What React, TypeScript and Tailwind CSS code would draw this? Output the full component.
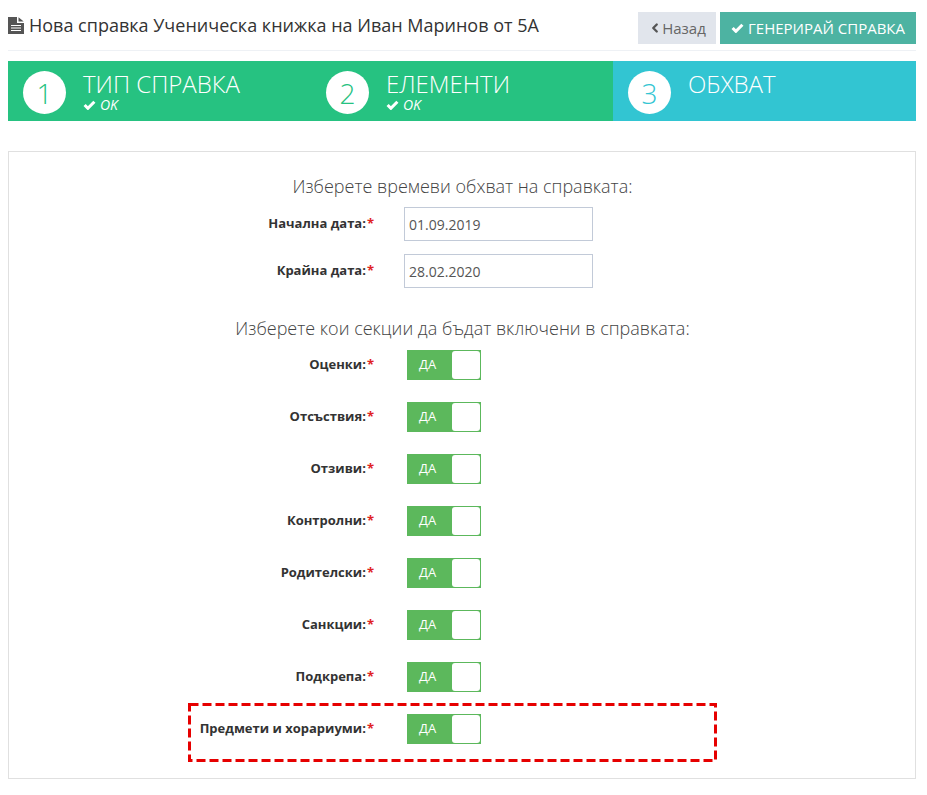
import { ChevronLeft } from 'lucide-react'

const sections = ['Оценки', 'Отсъствия', 'Отзиви', 'Контролни', 'Родителски', 'Санкции', 'Подкрепа', 'Предмети и хорариуми']

function Check({ className }: { className: string }) {
  return (
    <svg viewBox="0 0 16 12" className={className} fill="none" stroke="currentColor" strokeWidth="3.8">
      <path d="M2 6l4 4 8-8" />
    </svg>
  )
}

function FileIcon() {
  return (
    <svg viewBox="0 0 16 17" className="h-[17px] w-4 shrink-0">
      <path d="M0 0h9v6h7v11H0z" fill="#555" />
      <path d="M10.5 0.3L15.7 4.5h-5.2z" fill="#555" />
      <path d="M3 8.5h10M3 11h10M3 13.5h10" stroke="#fff" strokeWidth="1.2" />
    </svg>
  )
}

function Label({ text }: { text: string }) {
  return (
    <div className="mt-[-2px] w-[365px] shrink-0 text-right text-[13px] leading-[18px] font-bold text-[#333]">
      {text}:<span className="ml-[1px] text-[#e02222]">*</span>
    </div>
  )
}

function DateRow({ text, value }: { text: string; value: string }) {
  return (
    <div className="flex items-center">
      <Label text={text} />
      <div className="ml-[30px] flex h-[34px] w-[189px] items-center border border-[#c2cad8] pl-[4px] text-[14px] text-[#555]">
        {value}
      </div>
    </div>
  )
}

function SectionRow({ text, marked }: { text: string; marked: boolean }) {
  return (
    <div className="relative flex h-[30px] items-center">
      <Label text={text} />
      <div className="ml-[33px] flex h-[30px] w-[74px] items-center bg-[#5cb85c] pr-px">
        <div className="flex-1 pl-3 text-[13px] text-white">ДА</div>
        <div className="h-[28px] w-[28px] rounded-[3px] bg-white" />
      </div>
      {marked && (
        <svg className="absolute top-[-11px] left-[179px] h-[59px] w-[529px]" viewBox="0 0 529 59">
          <rect x="1.5" y="1.5" width="526" height="56" fill="none" stroke="#e60000" strokeWidth="3" strokeDasharray="9 4" />
        </svg>
      )}
    </div>
  )
}

function Step({ n, title, ok, width, color }: { n: string; title: string; ok?: boolean; width: string; color: string }) {
  return (
    <div className={`flex pt-[10px] pl-[15px] ${width}`}>
      <div className={`flex h-[43px] w-[43px] shrink-0 items-center justify-center rounded-full bg-white pt-[1px] text-[28px] font-light ${color}`}>
        {n}
      </div>
      <div className="ml-[17px]">
        <div className="mt-[-2px] text-[24px] leading-[29px] font-light">{title}</div>
        {ok && (
          <div className="flex items-center gap-[4px] text-[14px] leading-[14px] font-normal italic">
            <Check className="h-[10px] w-[13px]" />
            OK
          </div>
        )}
      </div>
    </div>
  )
}

export default function App() {
  return (
    <div className="h-[795px] overflow-hidden bg-white px-2 font-['Open_Sans',sans-serif] text-[#333]">
      <div className="mr-[3px]">
        <header className="flex h-[51px] items-center justify-between border-b border-[#eef1f5]">
          <div className="flex items-center gap-[5px] text-[18px] text-[#333]">
            <FileIcon />
            Нова справка Ученическа книжка на Иван Маринов от 5А
          </div>
          <div className="flex gap-1 self-start pt-3">
            <button className="flex h-8 w-[78px] items-center justify-center bg-[#e1e5ec] text-[15px] text-[#666]">
              <ChevronLeft className="h-[14px] w-[14px] text-[#555]" strokeWidth={4} />
              Назад
            </button>
            <button className="flex h-8 w-[196px] items-center justify-center gap-[4px] bg-[#4db3a2] text-[15px] text-white">
              <Check className="h-[10px] w-[13px]" />
              ГЕНЕРИРАЙ СПРАВКА
            </button>
          </div>
        </header>

        <div className="mt-[10px] flex h-[60px] text-white">
          <div className="flex w-[605px] bg-[#26c281]">
            <Step n="1" title="ТИП СПРАВКА" ok width="w-[303px]" color="text-[#26c281]" />
            <Step n="2" title="ЕЛЕМЕНТИ" ok width="w-[302px]" color="text-[#26c281]" />
          </div>
          <div className="flex flex-1 bg-[#32c5d2]">
            <Step n="3" title="ОБХВАТ" width="w-[303px]" color="text-[#32c5d2]" />
          </div>
        </div>

        <main className="mt-[30px] h-[628px] border border-[#e0e0e0]">
          <h3 className="mt-[23px] ml-[1px] text-center text-[18px] leading-[22px] font-light text-[#444]">
            Изберете времеви обхват на справката:
          </h3>
          <div className="mt-[10px] flex flex-col gap-[13px]">
            <DateRow text="Начална дата" value="01.09.2019" />
            <DateRow text="Крайна дата" value="28.02.2020" />
          </div>
          <h3 className="mt-[29px] ml-[1px] text-center text-[18px] leading-[22px] font-light text-[#444]">
            Изберете кои секции да бъдат включени в справката:
          </h3>
          <div className="mt-[11px] flex flex-col gap-[22px]">
            {sections.map((s, i) => (
              <SectionRow key={s} text={s} marked={i === sections.length - 1} />
            ))}
          </div>
        </main>
      </div>
    </div>
  )
}
